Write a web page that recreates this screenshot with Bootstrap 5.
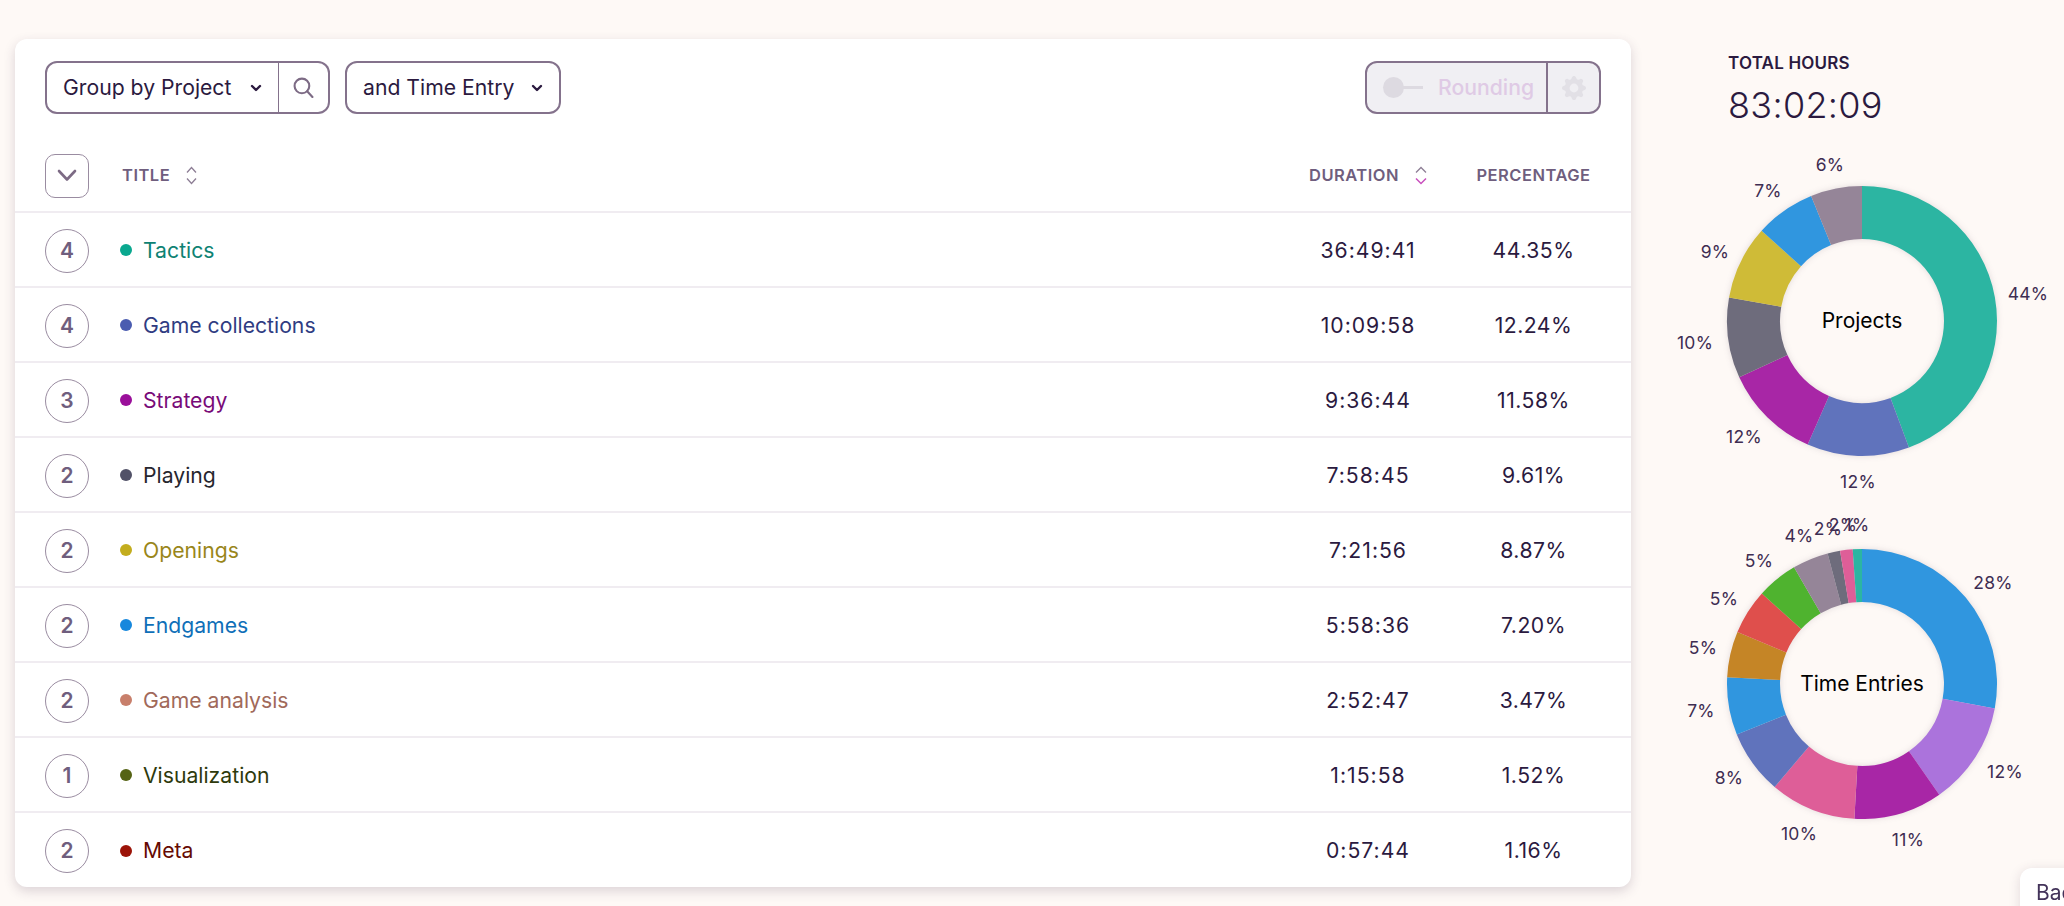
<!DOCTYPE html>
<html lang="en">
  <head>
    <meta charset="UTF-8" />
    <title>Reports</title>
    <link rel="stylesheet" href="https://cdn.jsdelivr.net/npm/bootstrap@5.3.3/dist/css/bootstrap.min.css" />
    <style>
      html, body { height: 100%; overflow: hidden; }
      body { background: #fef9f6; font-family: Inter, "Noto Sans", sans-serif; color: #2b1a3f; font-size: 21.2px; }
      .page-wrap { padding: 39px 0 0 15px; }
      .report-card { width: 1616px; flex: none; background: #fff; border: 0; border-radius: 12px; box-shadow: 0 4px 12px rgba(60, 40, 70, .18); overflow: hidden; }
      .report-tools { padding: 22px 30px 26px 30px; height: 101px; }
      .tool-btn { height: 53px; background: #fff; border: 2px solid #84728c; color: #2b1a3f; font-size: 21.2px; padding: 0 16px; display: flex; align-items: center; border-radius: 12px; white-space: nowrap; }
      .tool-group { display: flex; }
      .tool-group .tool-btn:first-child { border-top-right-radius: 0; border-bottom-right-radius: 0; border-right-width: 1px; }
      .tool-group .tool-btn:last-child { border-top-left-radius: 0; border-bottom-left-radius: 0; border-left-width: 0; }
      .group-btn { width: 234px; justify-content: space-between; }
      .search-btn { width: 51px; justify-content: center; padding: 0; }
      .entry-btn { width: 216px; justify-content: space-between; margin-left: 15px; }
      .round-btn { width: 183px; background: #f0eff3; color: #dfcae5; font-weight: 500; gap: 15px; border-right-width: 2px !important; }
      .gear-btn { width: 53px; background: #f0eff3; justify-content: center; padding: 0; }
      .round-track { position: relative; width: 40px; height: 21px; flex: none; }
      .round-track::before { content: ""; position: absolute; left: 14px; right: 0; top: 9px; height: 3px; background: #dddae1; }
      .round-track::after { content: ""; position: absolute; left: 0; top: 0; width: 21px; height: 21px; border-radius: 50%; background: #dddae1; }
      .report-table { table-layout: fixed; width: 1616px; margin: 0; }
      .report-table th, .report-table td { border-bottom: 2px solid #f0ecf1; padding: 0; vertical-align: middle; background: transparent; box-shadow: none; }
      .report-table tr:last-child td { border-bottom: 0; }
      .report-table thead th { height: 72px; font-size: 16.5px; font-weight: 600; letter-spacing: .5px; color: #6f5e7e; text-transform: uppercase; }
      .report-table tbody td { height: 75px; padding-top: 2px; color: #2b1a3f; font-size: 21.2px; letter-spacing: 1px; }
      .report-table tbody td.col-share { letter-spacing: .5px; }
      .col-toggle { width: 74px; padding-left: 30px !important; }
      .col-time { width: 162px; text-align: center; }
      .col-share { width: 182px; text-align: center; padding-right: 13px !important; }
      .expand-btn { width: 44px; height: 44px; border: 1.5px solid #9a8ca1; background: #fff; border-radius: 10px; display: flex; align-items: center; justify-content: center; padding: 0; }
      .count-pill { width: 44px; height: 44px; border: 1.5px solid #9a8ca1; border-radius: 50%; display: flex; align-items: center; justify-content: center; color: #6f5e7e; font-weight: 600; font-size: 21px; letter-spacing: 0; }
      .title-head { padding-left: 33px !important; }
      .title-cell { padding-left: 31px !important; letter-spacing: 0 !important; }
      .color-dot { width: 12px; height: 12px; border-radius: 50%; margin-right: 11px; flex: none; }
      .sort-icon { margin-left: 16px; vertical-align: -4px; }
      .side-col { flex: 1; min-width: 0; padding-top: 14px; }
      .hours-box { padding-left: 97px; }
      .hours-label { font-size: 17px; font-weight: 600; letter-spacing: .2px; line-height: 20px; margin-bottom: 10px; }
      .hours-value { font-size: 36px; font-weight: 300; line-height: 44px; letter-spacing: .3px; }
      .donut-svg { display: block; margin-left: 29px; }
      .donut-label { font-size: 17.5px; fill: #3e2d52; letter-spacing: .3px; text-anchor: middle; dominant-baseline: central; }
      .donut-name { font-size: 21px; fill: #000; text-anchor: middle; dominant-baseline: central; }
      .donut-ring { filter: drop-shadow(0 0 3px rgba(60, 40, 70, .15)); }
      .back-tip { position: fixed; left: 2020px; top: 868px; width: 160px; height: 60px; background: #fff; border-radius: 12px; padding: 9px 16px; color: #43335a; font-size: 21px; box-shadow: 0 2px 12px rgba(60, 40, 70, .15); white-space: nowrap; }
    </style>
  </head>
  <body>
    <div class="page-wrap d-flex align-items-start">
      <div class="card report-card">
        <div class="report-tools d-flex align-items-start justify-content-between">
          <div class="d-flex">
            <div class="tool-group">
              <button type="button" class="tool-btn group-btn">Group by Project
                <svg width="12" height="8" viewBox="0 0 12 8"><path d="M2 2l4 4 4-4" fill="none" stroke="#2b1a3f" stroke-width="2.4" stroke-linecap="round" stroke-linejoin="round" /></svg>
              </button>
              <button type="button" class="tool-btn search-btn">
                <svg width="21" height="21" viewBox="0 0 20 20"><circle cx="8.5" cy="8.5" r="7" fill="none" stroke="#7d6b85" stroke-width="2" /><path d="M13.5 13.5l5 5.5" stroke="#7d6b85" stroke-width="2" stroke-linecap="round" /></svg>
              </button>
            </div>
            <button type="button" class="tool-btn entry-btn">and Time Entry
              <svg width="12" height="8" viewBox="0 0 12 8"><path d="M2 2l4 4 4-4" fill="none" stroke="#2b1a3f" stroke-width="2.4" stroke-linecap="round" stroke-linejoin="round" /></svg>
            </button>
          </div>
          <div class="tool-group">
            <button type="button" class="tool-btn round-btn"><span class="round-track"></span>Rounding</button>
            <button type="button" class="tool-btn gear-btn">
              <svg width="24" height="24" viewBox="0 0 16 16"><path fill="#e2e0e6" d="M9.405 1.05c-.413-1.4-2.397-1.4-2.81 0l-.1.34a1.464 1.464 0 0 1-2.105.872l-.31-.17c-1.283-.698-2.686.705-1.987 1.987l.169.311c.446.82.023 1.841-.872 2.105l-.34.1c-1.4.413-1.4 2.397 0 2.81l.34.1a1.464 1.464 0 0 1 .872 2.105l-.17.31c-.698 1.283.705 2.686 1.987 1.987l.311-.169a1.464 1.464 0 0 1 2.105.872l.1.34c.413 1.4 2.397 1.4 2.81 0l.1-.34a1.464 1.464 0 0 1 2.105-.872l.31.17c1.283.698 2.686-.705 1.987-1.987l-.169-.311a1.464 1.464 0 0 1 .872-2.105l.34-.1c1.4-.413 1.4-2.397 0-2.81l-.34-.1a1.464 1.464 0 0 1-.872-2.105l.17-.31c.698-1.283-.705-2.686-1.987-1.987l-.311.169a1.464 1.464 0 0 1-2.105-.872l-.1-.34zM8 10.93a2.929 2.929 0 1 1 0-5.858 2.929 2.929 0 0 1 0 5.858z" /></svg>
            </button>
          </div>
        </div>
        <table class="table report-table">
          <thead>
            <tr>
              <th class="col-toggle">
                <button type="button" class="expand-btn">
                  <svg width="20" height="13" viewBox="0 0 20 13"><path d="M2 2l8 8.5 8-8.5" fill="none" stroke="#7d6b85" stroke-width="2.6" stroke-linecap="round" stroke-linejoin="round" /></svg>
                </button>
              </th>
              <th class="title-head">Title<svg class="sort-icon" width="11" height="19" viewBox="0 0 11 19"><path d="M1 6.5l4.5-5 4.5 5" fill="none" stroke="#8d7e95" stroke-width="1.3" /><path d="M1 12.5l4.5 5 4.5-5" fill="none" stroke="#8d7e95" stroke-width="1.3" /></svg></th>
              <th class="col-time">Duration<svg class="sort-icon" width="12" height="19" viewBox="0 0 12 19"><path d="M1 6.5l5-5 5 5" fill="none" stroke="#8d7e95" stroke-width="1.3" /><path d="M1 12.5l5 5 5-5" fill="none" stroke="#c94fbd" stroke-width="1.5" /></svg></th>
              <th class="col-share">Percentage</th>
            </tr>
          </thead>
          <tbody id="reportRows"></tbody>
        </table>
      </div>
      <div class="side-col">
        <div class="hours-box">
          <div class="hours-label">TOTAL HOURS</div>
          <div class="hours-value">83:02:09</div>
        </div>
        <svg id="projectDonut" class="donut-svg" width="404" height="363"></svg>
        <svg id="entryDonut" class="donut-svg" width="404" height="370"></svg>
      </div>
    </div>
    <div class="back-tip">Back to top</div>

    <script src="https://cdn.jsdelivr.net/npm/bootstrap@5.3.3/dist/js/bootstrap.bundle.min.js"></script>
    <script>
      const rows = [
        [4, "Tactics", "#0aa88f", "#0e8273", "36:49:41", "44.35%"],
        [4, "Game collections", "#4a5cb0", "#2f3c82", "10:09:58", "12.24%"],
        [3, "Strategy", "#9a0f9a", "#780a78", "9:36:44", "11.58%"],
        [2, "Playing", "#525268", "#26262e", "7:58:45", "9.61%"],
        [2, "Openings", "#c3ad1e", "#99861a", "7:21:56", "8.87%"],
        [2, "Endgames", "#1788dd", "#0f6fb8", "5:58:36", "7.20%"],
        [2, "Game analysis", "#c87f6b", "#a1695a", "2:52:47", "3.47%"],
        [1, "Visualization", "#556314", "#2e3a0c", "1:15:58", "1.52%"],
        [2, "Meta", "#9c1408", "#650a02", "0:57:44", "1.16%"],
      ];

      const table = document.getElementById("reportRows");
      rows.forEach((r) => {
        table.innerHTML += `
          <tr>
            <td class="col-toggle"><span class="count-pill">${r[0]}</span></td>
            <td class="title-cell"><div class="d-flex align-items-center" style="color:${r[3]}"><span class="color-dot" style="background:${r[2]}"></span>${r[1]}</div></td>
            <td class="col-time">${r[4]}</td>
            <td class="col-share">${r[5]}</td>
          </tr>`;
      });

      // slices are [percent, colour], labels are [text, x, y] inside the svg
      function drawDonut(id, name, cy, slices, labels) {
        const cx = 202, R = 135, r = 82;
        let start = 0, html = '<g class="donut-ring">';
        const pt = (rad, a) => {
          const t = (a / 100) * 2 * Math.PI;
          return (cx + rad * Math.sin(t)).toFixed(2) + " " + (cy - rad * Math.cos(t)).toFixed(2);
        };
        slices.forEach((s) => {
          const end = start + s[0];
          const big = s[0] > 50 ? 1 : 0;
          html += `<path fill="${s[1]}" d="M${pt(R, start)}A${R} ${R} 0 ${big} 1 ${pt(R, end)}L${pt(r, end)}A${r} ${r} 0 ${big} 0 ${pt(r, start)}Z" />`;
          start = end;
        });
        html += "</g>";
        labels.forEach((l) => {
          html += `<text class="donut-label" x="${l[1]}" y="${l[2]}">${l[0]}</text>`;
        });
        html += `<text class="donut-name" x="${cx}" y="${cy - 1}">${name}</text>`;
        document.getElementById(id).innerHTML = html;
      }

      drawDonut("projectDonut", "Projects", 194,
        [[44.35, "#2cb5a2"], [12.24, "#6073bc"], [11.58, "#a826a6"], [9.61, "#6e6c7c"], [8.87, "#cfbb37"], [7.2, "#3096df"], [6.15, "#958598"]],
        [["44%", 368, 166], ["12%", 198, 354], ["12%", 84, 309], ["10%", 35, 215], ["9%", 55, 124], ["7%", 108, 63], ["6%", 170, 37]]
      );
      drawDonut("entryDonut", "Time Entries", 194,
        [[27.9, "#3096df"], [12.4, "#ab73dc"], [10.6, "#a826a6"], [10.3, "#de5e98"], [7.7, "#6073bc"], [6.9, "#3096df"], [5.5, "#c58526"], [5.4, "#df4f4c"], [4.9, "#4fb32f"], [4.3, "#958598"], [1.5, "#6e6c7c"], [1.5, "#de5e98"], [1.1, "#2cb5a2"]],
        [["28%", 333, 92], ["12%", 345, 281], ["11%", 248, 349], ["10%", 139, 343], ["8%", 69, 287], ["7%", 41, 220], ["5%", 43, 157], ["5%", 64, 108], ["5%", 99, 70], ["4%", 139, 45], ["2%", 168, 38], ["2%", 183, 34], ["1%", 197, 34]]
      );
    </script>
  </body>
</html>
